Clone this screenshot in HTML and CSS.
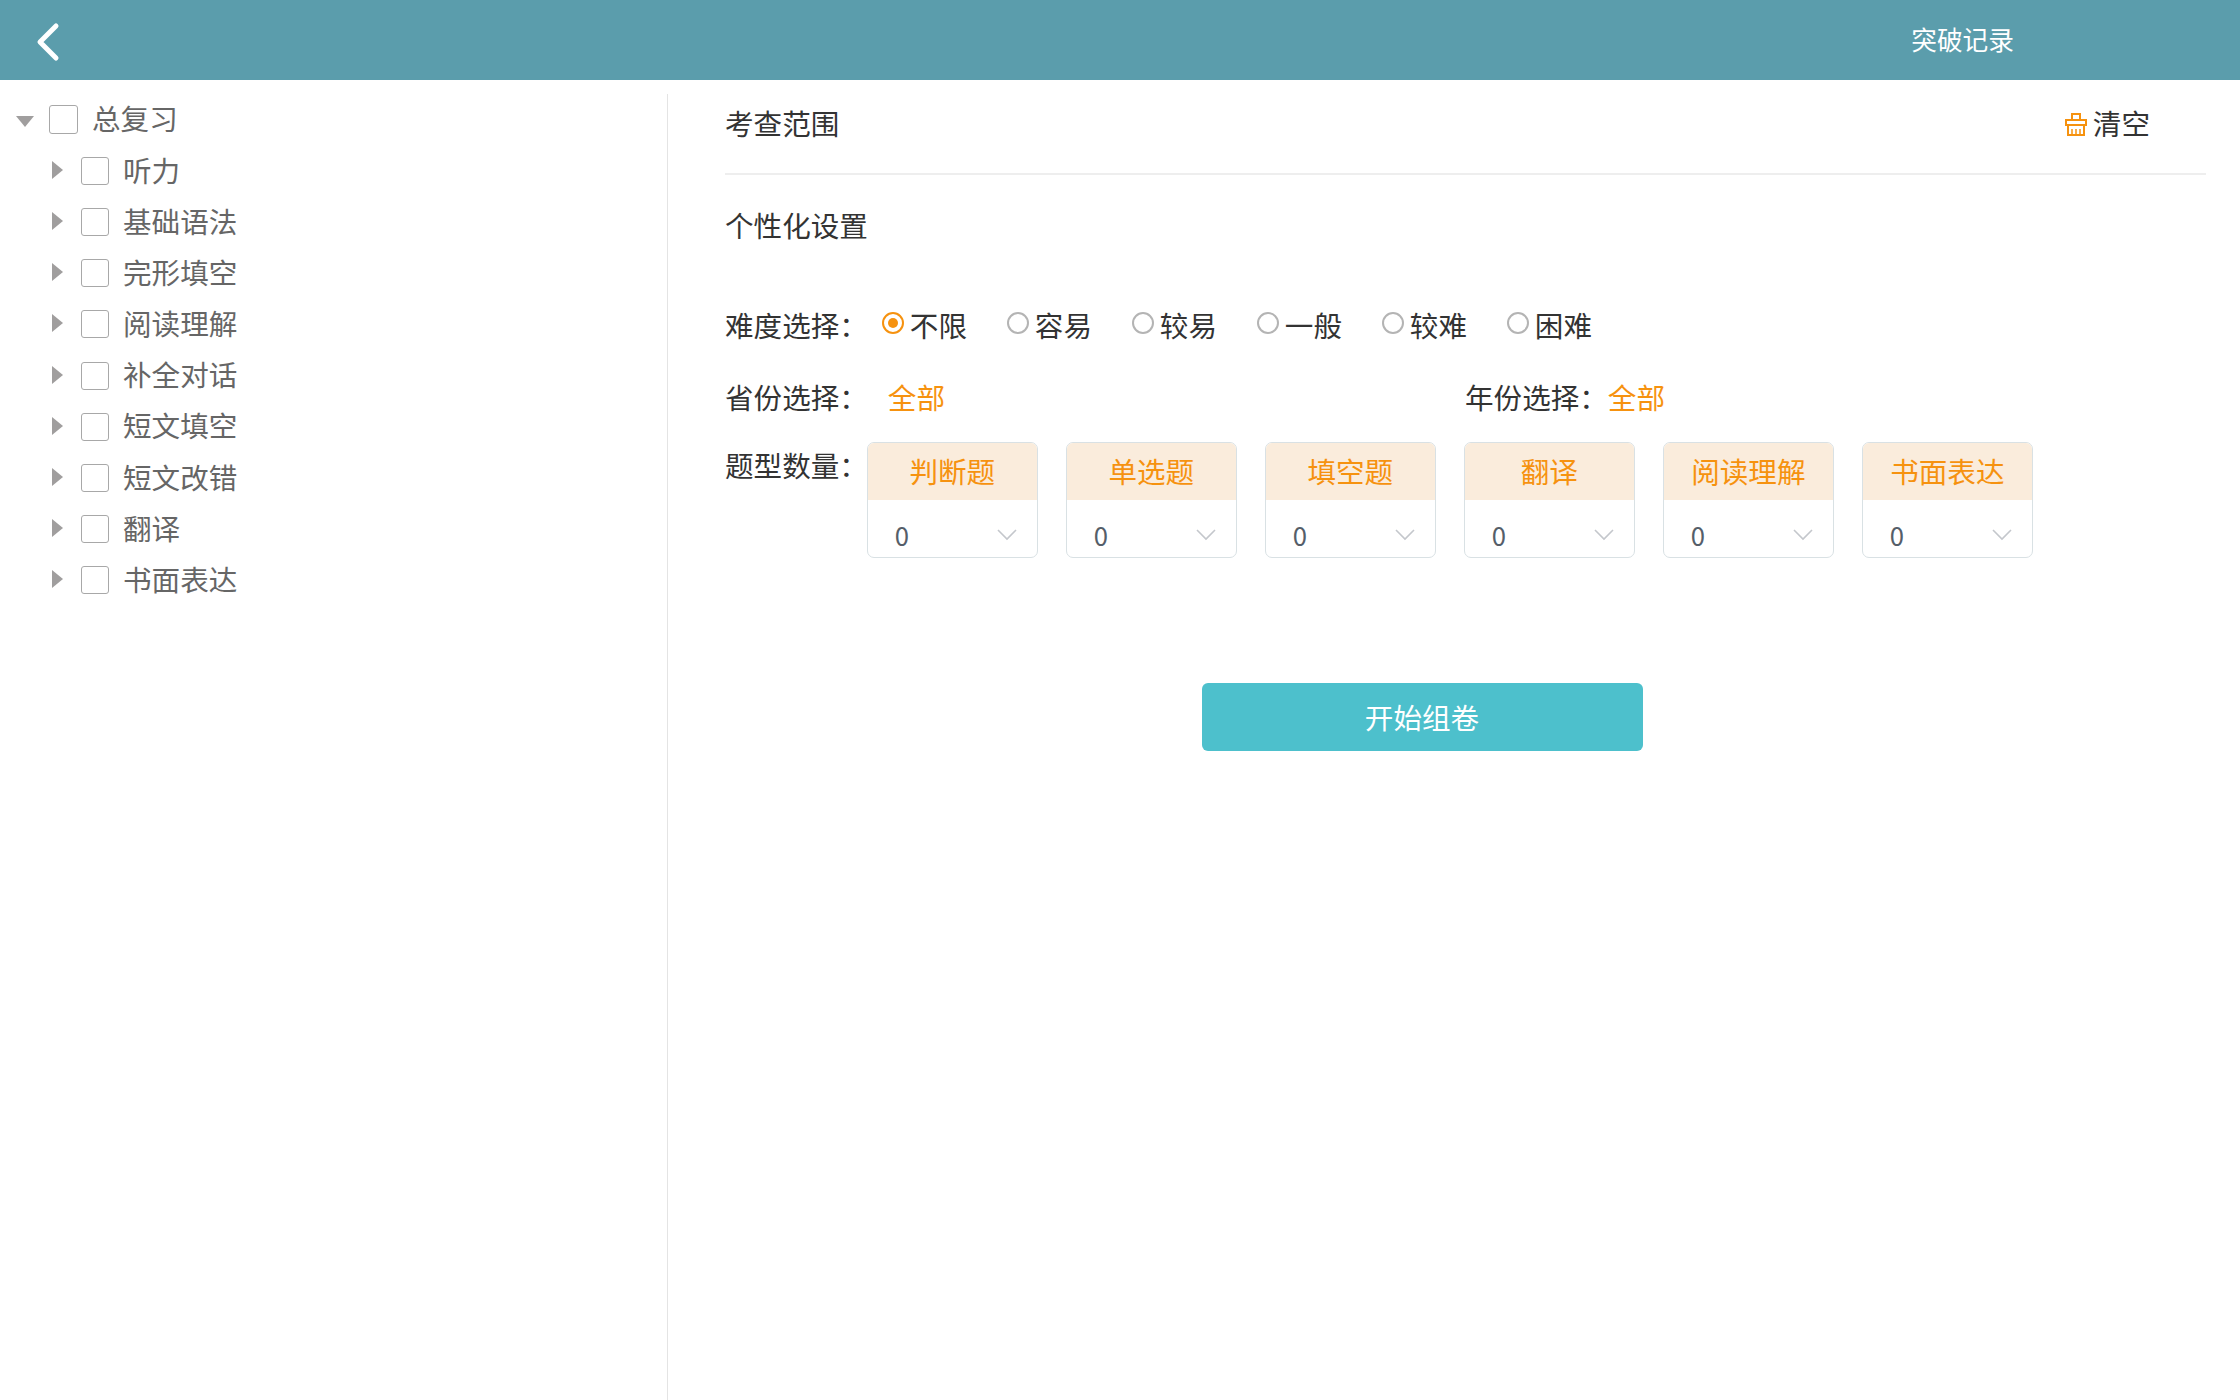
FILE: index.html
```html
<!DOCTYPE html>
<html lang="en">
<head>
    <meta charset="UTF-8">
    <meta name="viewport" content="width=device-width, initial-scale=1.0">
    <title>突破记录</title>
    <link rel="stylesheet" href="styles.css">
</head>
<body>
    <div class="top-bar">
        <svg class="back-icon" width="28" height="40" viewBox="0 0 28 40">
            <path d="M22 4 L6 20 L22 36" fill="none" stroke="#ffffff" stroke-width="5" stroke-linecap="round" stroke-linejoin="round"/>
        </svg>
        <span class="record-link">突破记录</span>
    </div>
    <div class="content">
        <div class="tree">
            <div class="tree-row root">
                <span class="arrow-down"></span>
                <span class="check"></span>
                <span class="tree-label">总复习</span>
            </div>
            <div class="tree-row"><span class="arrow-right"></span><span class="check"></span><span class="tree-label">听力</span></div>
            <div class="tree-row"><span class="arrow-right"></span><span class="check"></span><span class="tree-label">基础语法</span></div>
            <div class="tree-row"><span class="arrow-right"></span><span class="check"></span><span class="tree-label">完形填空</span></div>
            <div class="tree-row"><span class="arrow-right"></span><span class="check"></span><span class="tree-label">阅读理解</span></div>
            <div class="tree-row"><span class="arrow-right"></span><span class="check"></span><span class="tree-label">补全对话</span></div>
            <div class="tree-row"><span class="arrow-right"></span><span class="check"></span><span class="tree-label">短文填空</span></div>
            <div class="tree-row"><span class="arrow-right"></span><span class="check"></span><span class="tree-label">短文改错</span></div>
            <div class="tree-row"><span class="arrow-right"></span><span class="check"></span><span class="tree-label">翻译</span></div>
            <div class="tree-row"><span class="arrow-right"></span><span class="check"></span><span class="tree-label">书面表达</span></div>
        </div>
        <div class="main">
            <div class="scope-row">
                <span>考查范围</span>
                <span class="clear-btn">
                    <svg width="22" height="23" viewBox="0 0 22 23" fill="none" stroke="#f6920f" stroke-width="2">
                        <path d="M7 7 V1 H15 V7"/>
                        <path d="M1 7 H21 V12 H1 Z"/>
                        <path d="M3 12 V22 H19 V12"/>
                        <path d="M7 22 V16 M11 22 V16 M15 22 V16" stroke-width="1.5"/>
                    </svg>
                    清空
                </span>
            </div>
            <div class="section-title">个性化设置</div>
            <div class="level-row">
                <span class="field-label">难度选择：</span>
                <div class="radios">
                    <span class="radio-item"><span class="radio on"></span>不限</span>
                    <span class="radio-item"><span class="radio"></span>容易</span>
                    <span class="radio-item"><span class="radio"></span>较易</span>
                    <span class="radio-item"><span class="radio"></span>一般</span>
                    <span class="radio-item"><span class="radio"></span>较难</span>
                    <span class="radio-item"><span class="radio"></span>困难</span>
                </div>
            </div>
            <div class="area-row">
                <div class="area-col">
                    <span class="field-label">省份选择：</span>
                    <span class="all-link province">全部</span>
                </div>
                <div class="area-col">
                    <span class="field-label">年份选择：</span>
                    <span class="all-link">全部</span>
                </div>
            </div>
            <div class="count-row">
                <span class="field-label">题型数量：</span>
                <div class="cards">
                    <div class="card"><div class="card-head">判断题</div><div class="card-body"><span>0</span><svg class="caret" width="20" height="12" viewBox="0 0 20 12"><path d="M1 1 L10 10 L19 1" fill="none" stroke="#c4c7cc" stroke-width="1.6"/></svg></div></div>
                    <div class="card"><div class="card-head">单选题</div><div class="card-body"><span>0</span><svg class="caret" width="20" height="12" viewBox="0 0 20 12"><path d="M1 1 L10 10 L19 1" fill="none" stroke="#c4c7cc" stroke-width="1.6"/></svg></div></div>
                    <div class="card"><div class="card-head">填空题</div><div class="card-body"><span>0</span><svg class="caret" width="20" height="12" viewBox="0 0 20 12"><path d="M1 1 L10 10 L19 1" fill="none" stroke="#c4c7cc" stroke-width="1.6"/></svg></div></div>
                    <div class="card"><div class="card-head">翻译</div><div class="card-body"><span>0</span><svg class="caret" width="20" height="12" viewBox="0 0 20 12"><path d="M1 1 L10 10 L19 1" fill="none" stroke="#c4c7cc" stroke-width="1.6"/></svg></div></div>
                    <div class="card"><div class="card-head">阅读理解</div><div class="card-body"><span>0</span><svg class="caret" width="20" height="12" viewBox="0 0 20 12"><path d="M1 1 L10 10 L19 1" fill="none" stroke="#c4c7cc" stroke-width="1.6"/></svg></div></div>
                    <div class="card"><div class="card-head">书面表达</div><div class="card-body"><span>0</span><svg class="caret" width="20" height="12" viewBox="0 0 20 12"><path d="M1 1 L10 10 L19 1" fill="none" stroke="#c4c7cc" stroke-width="1.6"/></svg></div></div>
                </div>
            </div>
            <div class="start-wrap">
                <div class="start-btn">开始组卷</div>
            </div>
        </div>
    </div>
</body>
</html>
```
FILE: styles.css
```css
body {
    font-family: "Noto Sans CJK SC", "Noto Sans", sans-serif;
    background-color: #ffffff;
    margin: 0;
    padding: 0;
    color: #333333;
    font-size: 28.57px;
    height: 1400px;
    overflow: hidden;
}
.top-bar {
    height: 80px;
    background-color: #5b9dac;
    display: flex;
    align-items: center;
    justify-content: space-between;
    padding: 0 226px 0 34px;
    color: #ffffff;
}
.back-icon {
    margin-top: 4px;
}
.record-link {
    font-size: 25.7px;
    margin-top: -4px;
}
.content {
    display: flex;
    height: 1320px;
}
.tree {
    width: 668px;
    box-sizing: border-box;
    margin-top: 14px;
    border-right: 1px solid #e4e4e4;
    color: #666666;
}
.tree-row {
    height: 51.2px;
    display: flex;
    align-items: center;
    padding-left: 50px;
}
.tree-row.root {
    padding-left: 16px;
}
.arrow-right {
    width: 0;
    height: 0;
    border-top: 9px solid transparent;
    border-bottom: 9px solid transparent;
    border-left: 11px solid #a09e9e;
    margin-top: -2px;
    margin-right: 18px;
    margin-left: 2px;
}
.arrow-down {
    width: 0;
    height: 0;
    border-left: 9px solid transparent;
    border-right: 9px solid transparent;
    border-top: 11px solid #a09e9e;
    margin-right: 15px;
    margin-top: 3px;
}
.check {
    width: 26px;
    height: 26px;
    border: 1px solid #a8a8a8;
    border-radius: 3px;
    box-sizing: content-box;
}
.root .check {
    width: 27px;
    height: 27px;
}
.tree-label {
    margin-left: 14px;
    margin-top: -2px;
    line-height: 1;
}
.main {
    flex: 1;
    padding: 0 34px 0 57px;
}
.scope-row {
    height: 95px;
    border-bottom: 2px solid #eeeeee;
    display: flex;
    justify-content: space-between;
    align-items: center;
    padding-right: 56px;
    padding-bottom: 9px;
    box-sizing: border-box;
}
.clear-btn {
    display: flex;
    align-items: center;
    gap: 6px;
}
.clear-btn svg {
    margin-top: 4px;
}
.section-title {
    margin-top: 30px;
    line-height: 40px;
}
.level-row {
    display: flex;
    align-items: center;
    margin-top: 59px;
    height: 40px;
}
.radios {
    display: flex;
    margin-left: 14px;
}
.radio-item {
    display: flex;
    align-items: center;
    gap: 6px;
    width: 125px;
}
.radio {
    width: 18px;
    height: 18px;
    border: 2px solid #b4b4b4;
    border-radius: 50%;
    margin-top: -2px;
    box-sizing: content-box;
    position: relative;
}
.radio.on {
    border-color: #f6920f;
}
.radio.on::after {
    content: "";
    position: absolute;
    left: 4px;
    top: 4px;
    width: 10px;
    height: 10px;
    border-radius: 50%;
    background-color: #f6920f;
}
.area-row {
    display: flex;
    margin-top: 32px;
    height: 40px;
    align-items: center;
}
.area-col {
    width: 740px;
    display: flex;
    align-items: center;
}
.all-link {
    color: #f6920f;
}
.province {
    margin-left: 20px;
}
.count-row {
    display: flex;
    align-items: flex-start;
    margin-top: 26px;
}
.count-row .field-label {
    line-height: 40px;
    padding-top: 3px;
}
.cards {
    display: flex;
    gap: 28px;
    margin-left: -1px;
}
.card {
    width: 171px;
    height: 116px;
    box-sizing: border-box;
    border: 1px solid #d9e1e4;
    border-radius: 7px;
    overflow: hidden;
}
.card-head {
    height: 57px;
    background-color: #faecdc;
    color: #f6920f;
    text-align: center;
    line-height: 55px;
}
.card-body {
    height: 57px;
    display: flex;
    justify-content: space-between;
    align-items: center;
    padding: 12px 20px 0 27px;
    box-sizing: border-box;
    font-size: 25.7px;
    color: #555e69;
}
.caret {
    margin-top: 0;
}
.start-wrap {
    display: flex;
    justify-content: center;
    margin-top: 125px;
    padding-right: 87px;
}
.start-btn {
    width: 441px;
    height: 68px;
    line-height: 68px;
    background-color: #4dc0cc;
    color: #ffffff;
    text-align: center;
    border-radius: 6px;
}
```
